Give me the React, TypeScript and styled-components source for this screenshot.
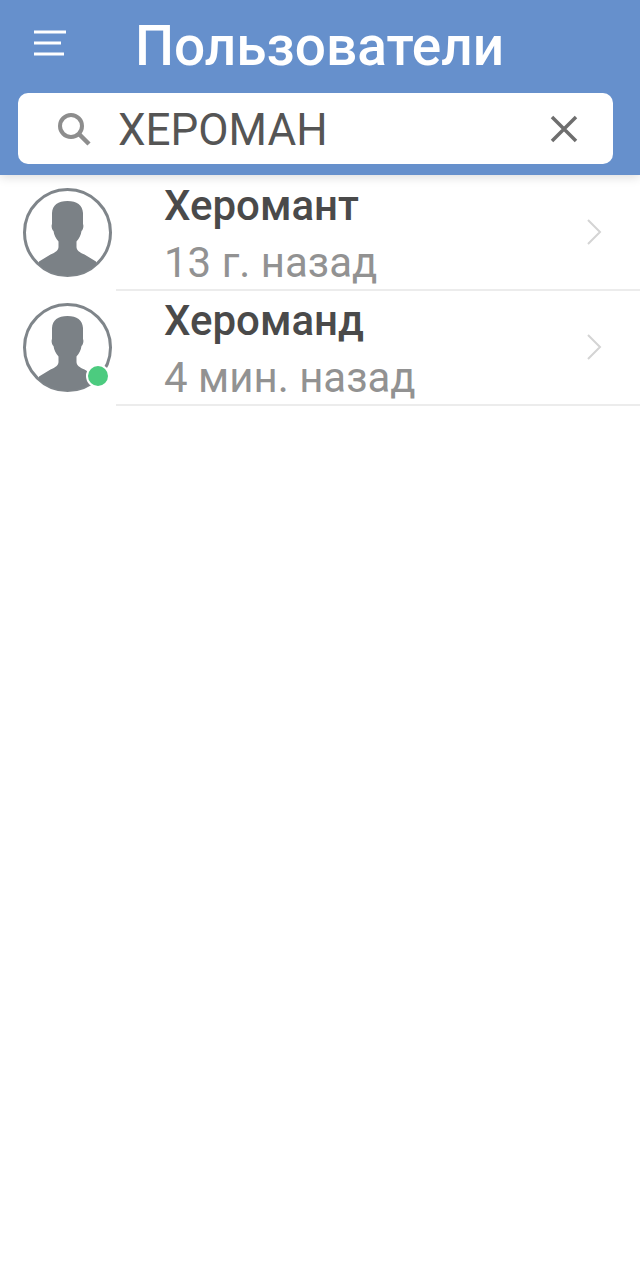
import React from 'react'
import styled, { createGlobalStyle } from 'styled-components'

const GlobalStyle = createGlobalStyle`
  html, body {
    margin: 0;
    padding: 0;
    background: #ffffff;
    font-family: Roboto, "Liberation Sans", sans-serif;
  }
`

const Page = styled.div`
  width: 640px;
  height: 1275px;
  overflow: hidden;
  background: #ffffff;
`

const Header = styled.header`
  position: relative;
  box-sizing: border-box;
  height: 175px;
  padding: 0 27px 11px 18px;
  display: flex;
  flex-direction: column;
  background: #6690cc;
  box-shadow: 0 2px 10px rgba(0, 0, 0, 0.14);
`

const TitleBar = styled.div`
  height: 93px;
  display: flex;
  align-items: center;
`

const MenuButton = styled.svg`
  width: 34px;
  height: 30px;
  margin-left: 15px;
  margin-bottom: 5px;
  flex-shrink: 0;
`

const Title = styled.h1`
  margin: 0 0 0 68px;
  font-size: 55px;
  line-height: 93px;
  font-weight: 500;
  color: #ffffff;
  white-space: nowrap;
`

const SearchBox = styled.div`
  height: 71px;
  display: flex;
  align-items: center;
  padding: 0 35px 0 39px;
  background: #ffffff;
  border-radius: 10px;
`

const SearchIcon = styled.svg`
  width: 34px;
  height: 34px;
  flex-shrink: 0;
`

const SearchText = styled.span`
  flex: 1;
  margin: 3px 0 0 27px;
  font-size: 44px;
  color: #555555;
`

const ClearIcon = styled.svg`
  width: 28px;
  height: 28px;
  flex-shrink: 0;
`

const List = styled.ul`
  margin: 0;
  padding: 1px 0 0;
  list-style: none;
`

const Row = styled.li`
  box-sizing: border-box;
  height: 115px;
  display: flex;
  align-items: center;
  padding-left: 23px;
`

const AvatarWrap = styled.div`
  position: relative;
  width: 89px;
  height: 89px;
  flex-shrink: 0;
  margin-top: -2px;
`

const AvatarSvg = styled.svg`
  display: block;
  width: 89px;
  height: 89px;
`

const OnlineDot = styled.span`
  position: absolute;
  right: 4px;
  bottom: 6px;
  width: 20px;
  height: 20px;
  border-radius: 50%;
  background: #4ccb7f;
  box-shadow: 0 0 0 2px #ffffff;
`

const RowBody = styled.div`
  flex: 1;
  align-self: stretch;
  display: flex;
  align-items: center;
  margin-left: 4px;
  padding-left: 48px;
  padding-right: 38px;
  border-bottom: 2px solid #ececec;
`

const RowText = styled.div`
  flex: 1;
  display: flex;
  flex-direction: column;
  margin-top: 3px;
`

const Name = styled.div`
  font-size: 42px;
  line-height: 56px;
  font-weight: 500;
  color: #4a4a4a;
`

const LastSeen = styled.div`
  margin-top: 1px;
  font-size: 42px;
  line-height: 56px;
  color: #929292;
`

const Chevron = styled.svg`
  width: 16px;
  height: 28px;
  flex-shrink: 0;
  margin-top: -2px;
`

const Avatar = ({ id, online }: { id: string; online?: boolean }): React.ReactElement => (
  <AvatarWrap>
    <AvatarSvg viewBox="0 0 89 89">
      <defs>
        <clipPath id={id}>
          <circle cx="44.5" cy="44.5" r="43" />
        </clipPath>
      </defs>
      <circle cx="44.5" cy="44.5" r="43" fill="#fff" stroke="#7f858a" strokeWidth="3" />
      <path
        clipPath={`url(#${id})`}
        fill="#7b8186"
        d="M44.5 13C35 13 29.500 17 29 25v11c-1 2 0 6 1.500 7 .5 4 2.500 8 5 10.500V59c0 3-3 5.500-8 7.500L16 73.500V89h57V73.500L61.500 66.500c-5-2-8-4.500-8-7.500v-5.500c2.500-2.500 4.500-6.500 5-10.500 1.500-1 2.500-5 1.500-7V25c-.5-8-6-12-15.500-12z"
      />
    </AvatarSvg>
    {online && <OnlineDot />}
  </AvatarWrap>
)

const users = [
  { name: 'Херомант', seen: '13 г. назад', online: false },
  { name: 'Хероманд', seen: '4 мин. назад', online: true },
]

const App = (): React.ReactElement => {
  return (
    <Page>
      <GlobalStyle />
      <Header>
        <TitleBar>
          <MenuButton viewBox="0 0 34 30">
            <path d="M1 3h32M1 14h27M1 25h30" stroke="#fff" strokeWidth="3" fill="none" />
          </MenuButton>
          <Title>Пользователи</Title>
        </TitleBar>
        <SearchBox>
          <SearchIcon viewBox="0 0 34 34">
            <circle cx="14" cy="14" r="11" fill="none" stroke="#8d8d8d" strokeWidth="4" />
            <path d="M22 22l10 10" stroke="#8d8d8d" strokeWidth="4.500" />
          </SearchIcon>
          <SearchText>ХЕРОМАН</SearchText>
          <ClearIcon viewBox="0 0 28 28">
            <path d="M2 2l24 24M26 2L2 26" stroke="#6e6e6e" strokeWidth="3.500" />
          </ClearIcon>
        </SearchBox>
      </Header>
      <List>
        {users.map((user) => (
          <Row key={user.name}>
            <Avatar id={`avatar-${user.name}`} online={user.online} />
            <RowBody>
              <RowText>
                <Name>{user.name}</Name>
                <LastSeen>{user.seen}</LastSeen>
              </RowText>
              <Chevron viewBox="0 0 16 28">
                <path d="M2 2l12 12L2 26" stroke="#d4d4d4" strokeWidth="2" fill="none" />
              </Chevron>
            </RowBody>
          </Row>
        ))}
      </List>
    </Page>
  )
}

export default App
